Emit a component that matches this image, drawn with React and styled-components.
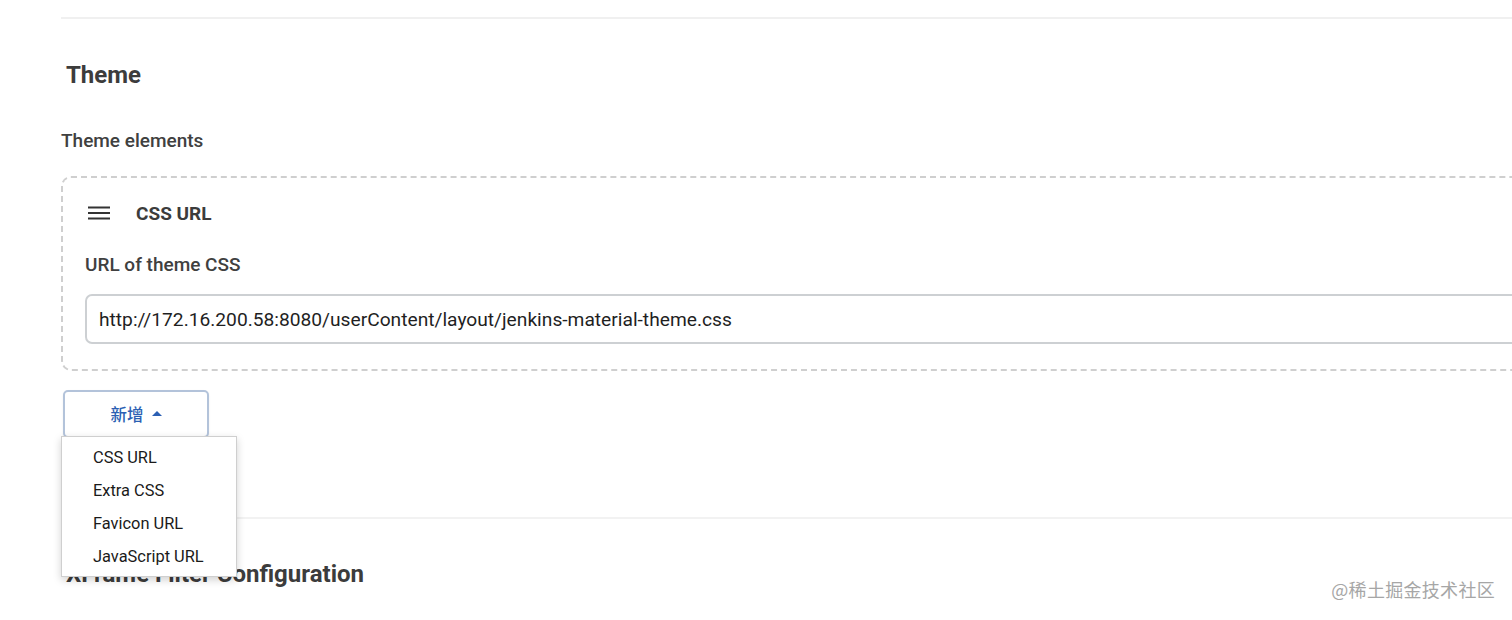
import React from 'react'
import styled, { createGlobalStyle } from 'styled-components'

const Global = createGlobalStyle`
  html, body {
    margin: 0;
    padding: 0;
    background: #fff;
    overflow: hidden;
    font-family: Roboto, "Noto Sans CJK SC", sans-serif;
    color: #333;
  }
`

const Page = styled.div`
  position: relative;
  height: 620px;
  overflow: hidden;
`

const Main = styled.div`
  width: 1560px;
  padding-left: 61px;
  padding-top: 17px;
`

const Rule = styled.div`
  height: 2px;
  background: ${p => p.light ? '#f2f2f2' : '#f0f0f0'};
`

const Section = styled.section`
  padding-top: ${p => p.top}px;
`

const Heading = styled.h2`
  margin: 0 0 0 5px;
  font-size: 24px;
  font-weight: 700;
  line-height: 28px;
  color: #3c3c3c;
`

const Label = styled.div`
  font-size: 19px;
  font-weight: 500;
  line-height: 23px;
  color: #404040;
`

const Repeated = styled.div`
  margin-top: 24px;
  border: 2px dashed #cfcfcf;
  border-radius: 10px;
  padding: 20px 0 25px 22px;
`

const ItemHeader = styled.div`
  display: flex;
  align-items: center;
  gap: 26px;
  height: 30px;
`

const Handle = styled.svg`
  width: 22px;
  height: 14px;
  margin-left: 3px;
`

const ItemTitle = styled.span`
  font-size: 19px;
  font-weight: 700;
  color: #3c3c3c;
`

const Field = styled.div`
  margin-top: 25px;
  display: flex;
  flex-direction: column;
  gap: 18px;
`

const Input = styled.div`
  box-sizing: border-box;
  height: 50px;
  border: 2px solid #cdd0d3;
  border-radius: 7px;
  display: flex;
  align-items: center;
  padding-left: 12px;
  font-size: 19.2px;
  color: #1f1f1f;
`

const AddWrap = styled.div`
  position: relative;
  margin-top: 19px;
  height: 127px;
`

const AddButton = styled.button`
  margin-left: 2px;
  width: 146px;
  height: 48px;
  background: #fff;
  border: 2px solid #b3c3da;
  border-radius: 5px;
  color: #2b5fb3;
  font-family: Roboto, "Noto Sans CJK SC", sans-serif;
  font-size: 16.5px;
  font-weight: 500;
  display: flex;
  align-items: center;
  justify-content: center;
  gap: 8px;
  padding: 0;
  box-shadow: 0 1px 2px rgba(0,0,0,0.08);
`

const Caret = styled.span`
  width: 0;
  height: 0;
  border-left: 5px solid transparent;
  border-right: 5px solid transparent;
  border-bottom: 5px solid #2b5fb3;
  margin-top: -2px;
`

const Menu = styled.ul`
  position: absolute;
  left: 0;
  top: 46px;
  z-index: 5;
  margin: 0;
  width: 174px;
  padding: 4px 0 3px;
  list-style: none;
  background: #fff;
  border: 1px solid #cfcfcf;
  box-shadow: 0 3px 8px rgba(0,0,0,0.18);
`

const MenuItem = styled.li`
  height: 33px;
  line-height: 33px;
  padding-left: 31px;
  font-size: 16.4px;
  color: #1a1a1a;
`

const Watermark = styled.div`
  position: absolute;
  right: 17px;
  bottom: 18px;
  font-size: 18px;
  color: #a6a6a6;
  font-family: "Noto Sans CJK SC", sans-serif;
  letter-spacing: 0.3px;
`

const items = ['CSS URL', 'Extra CSS', 'Favicon URL', 'JavaScript URL']

export default function App() {
  return (
    <Page>
      <Global />
      <Main>
        <Rule />
        <Section top={42}>
          <Heading>Theme</Heading>
          <Section top={40}>
            <Label>Theme elements</Label>
          </Section>
          <Repeated>
            <ItemHeader>
              <Handle viewBox="0 0 22 14">
                <rect x="0" y="0.5" width="22" height="2" fill="#333" />
                <rect x="0" y="6" width="22" height="2" fill="#333" />
                <rect x="0" y="11.5" width="22" height="2" fill="#333" />
              </Handle>
              <ItemTitle>CSS URL</ItemTitle>
            </ItemHeader>
            <Field>
              <Label>URL of theme CSS</Label>
              <Input>http://172.16.200.58:8080/userContent/layout/jenkins-material-theme.css</Input>
            </Field>
          </Repeated>
          <AddWrap>
            <AddButton>新增 <Caret /></AddButton>
            <Menu>
              {items.map(i => <MenuItem key={i}>{i}</MenuItem>)}
            </Menu>
          </AddWrap>
        </Section>
        <Rule light />
        <Section top={41}>
          <Heading>XFrame Filter Configuration</Heading>
        </Section>
      </Main>
      <Watermark>@稀土掘金技术社区</Watermark>
    </Page>
  )
}
